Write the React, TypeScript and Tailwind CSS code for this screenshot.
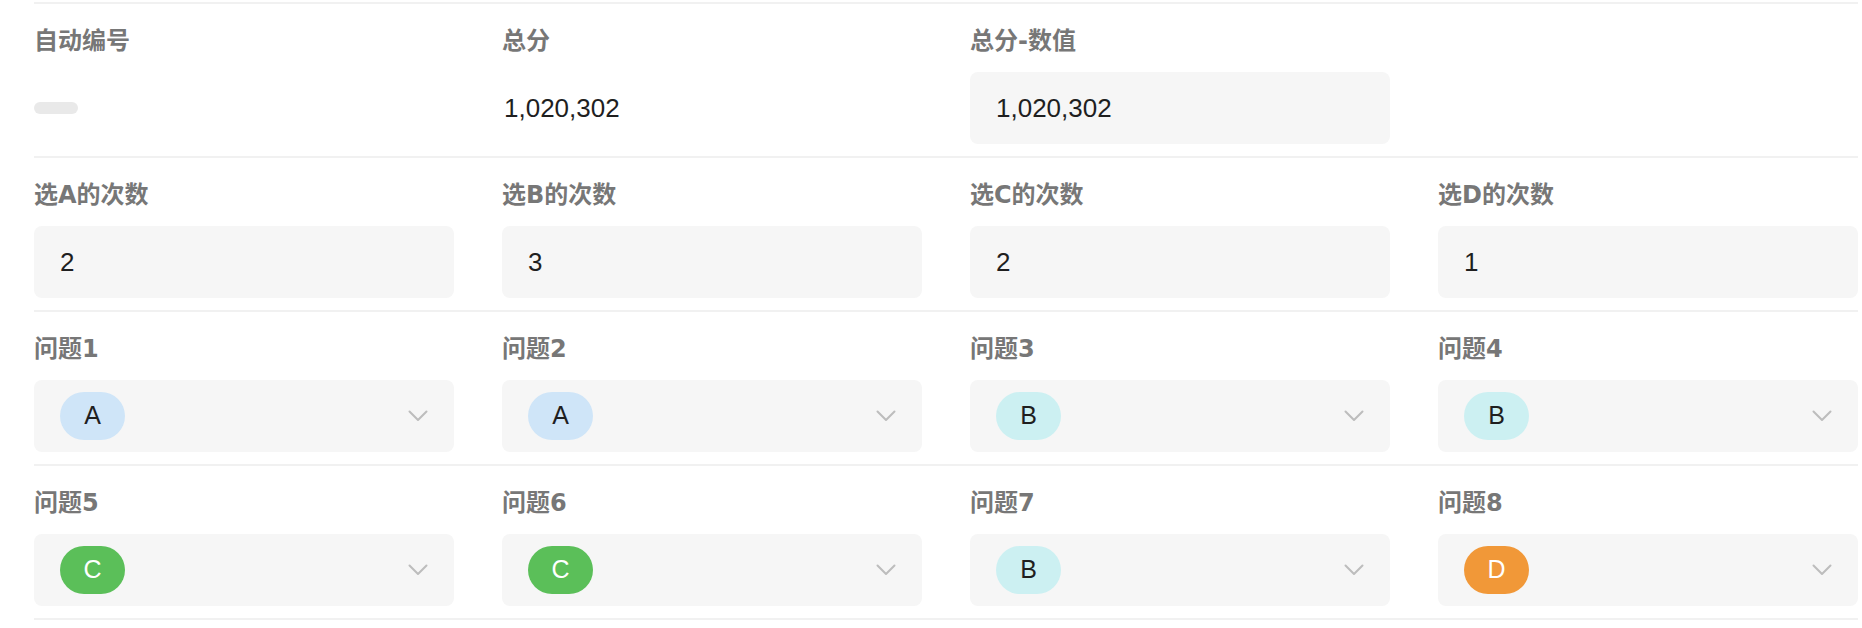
// Record detail view: computed fields + question answers

type Opt = "A" | "B" | "C" | "D";

const pillColor: Record<Opt, string> = {
  A: "bg-[#cfe5f8] text-[#1f1f1f]",
  B: "bg-[#ccf0f2] text-[#1f1f1f]",
  C: "bg-[#5bbf59] text-white",
  D: "bg-[#f19838] text-white",
};

const counts = [
  { label: "选A的次数", value: "2" },
  { label: "选B的次数", value: "3" },
  { label: "选C的次数", value: "2" },
  { label: "选D的次数", value: "1" },
];

const answers: Opt[] = ["A", "A", "B", "B", "C", "C", "B", "D"];

function Label({ children }: { children: React.ReactNode }) {
  return (
    <div
      className="h-8 text-[24px] leading-8 font-semibold text-[#777777] mb-[15px]"
      style={{ fontFamily: '"DejaVu Sans", "Noto Sans CJK SC", sans-serif' }}
    >
      {children}
    </div>
  );
}

function Chevron() {
  return (
    <svg width="20" height="12" viewBox="0 0 20 12" fill="none">
      <polyline
        points="1.5,1.5 10,10 18.5,1.5"
        stroke="#bdbdbd"
        strokeWidth="2"
        strokeLinecap="round"
        strokeLinejoin="round"
      />
    </svg>
  );
}

function Row({ children }: { children: React.ReactNode }) {
  return (
    <div className="grid grid-cols-4 gap-x-12 border-t-2 border-[#f1f1f1] pt-[21px] pb-3">
      {children}
    </div>
  );
}

function Box({ children }: { children?: React.ReactNode }) {
  return (
    <div className="h-[72px] rounded-lg bg-[#f6f6f6] flex items-center pl-[26px] pr-[26px] text-[26px] text-[#1f1f1f]">
      {children}
    </div>
  );
}

export default function App() {
  return (
    <div
      className="bg-white pt-[2px] ml-[34px] w-[1824px]"
      style={{ fontFamily: '"Liberation Sans", "Noto Sans CJK SC", sans-serif' }}
    >
      <Row>
        <div>
          <Label>自动编号</Label>
          <div className="h-[72px] flex items-center">
            <div className="h-3 w-11 rounded-full bg-[#e9e9e9]" />
          </div>
        </div>
        <div>
          <Label>总分</Label>
          <div className="h-[72px] flex items-center pl-[2px] text-[26px] text-[#1f1f1f]">1,020,302</div>
        </div>
        <div>
          <Label>总分-数值</Label>
          <Box>1,020,302</Box>
        </div>
        <div />
      </Row>

      <Row>
        {counts.map((c) => (
          <div key={c.label}>
            <Label>{c.label}</Label>
            <Box>{c.value}</Box>
          </div>
        ))}
      </Row>

      {[0, 4].map((start) => (
        <Row key={start}>
          {answers.slice(start, start + 4).map((a, i) => (
            <div key={i}>
              <Label>问题{start + i + 1}</Label>
              <Box>
                <span
                  className={`h-12 w-[65px] rounded-full flex items-center justify-center text-[25px] ${pillColor[a]}`}
                >
                  {a}
                </span>
                <span className="ml-auto flex">
                  <Chevron />
                </span>
              </Box>
            </div>
          ))}
        </Row>
      ))}
      <div className="border-t-2 border-[#f1f1f1]" />
    </div>
  );
}
